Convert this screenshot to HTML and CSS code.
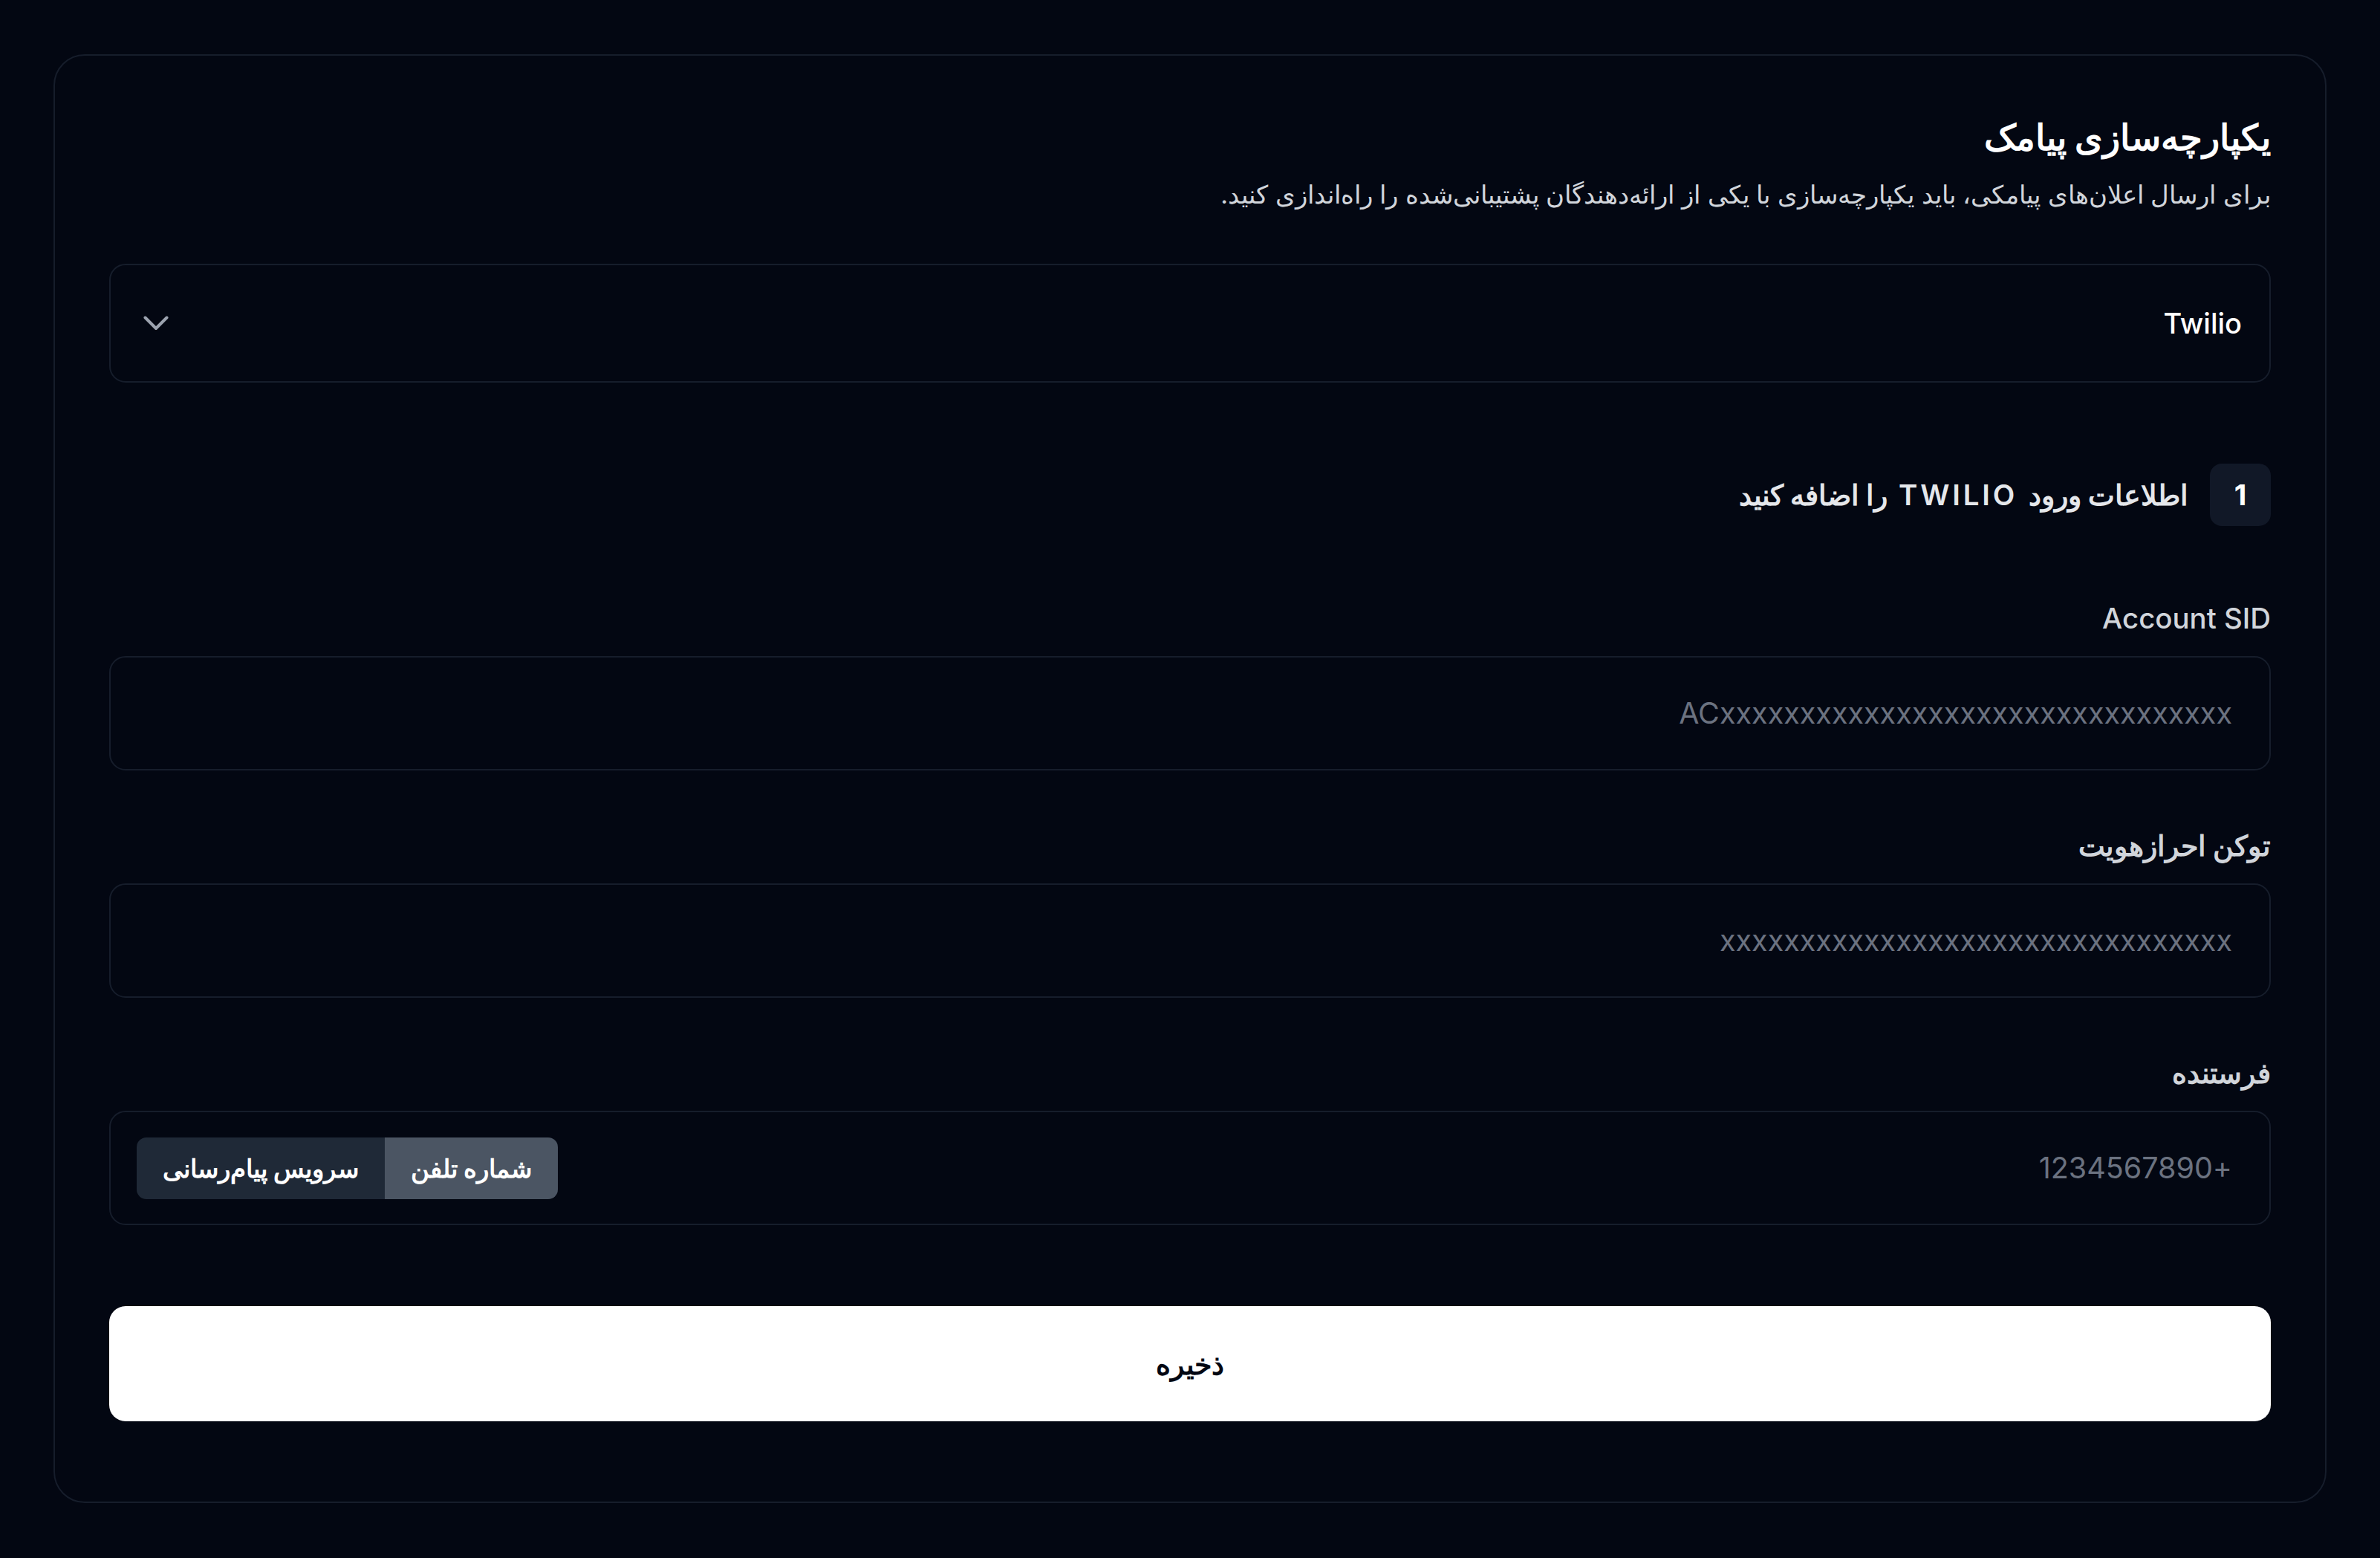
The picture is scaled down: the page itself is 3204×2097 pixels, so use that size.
FILE: index.html
```html
<!DOCTYPE html>
<html lang="fa" dir="rtl">
<head>
<meta charset="utf-8">
<title>یکپارچه‌سازی پیامک</title>
<link rel="stylesheet" href="styles.css">
</head>
<body>
<main class="card">
  <header class="head">
    <h1 class="title">یکپارچه‌سازی پیامک</h1>
    <p class="subtitle">برای ارسال اعلان‌های پیامکی، باید یکپارچه‌سازی با یکی از ارائه‌دهندگان پشتیبانی‌شده را راه‌اندازی کنید.</p>
  </header>

  <div class="select">
    <span class="select-value">Twilio</span>
    <svg class="chevron" viewBox="0 0 34 20" width="34" height="20" aria-hidden="true">
      <path d="M2.5 2.5 L17 17 L31.5 2.5" fill="none" stroke="#9ca3af" stroke-width="4" stroke-linecap="round" stroke-linejoin="round"/>
    </svg>
  </div>

  <div class="step">
    <span class="badge">1</span>
    <h2 class="step-title">اطلاعات ورود <span class="brand">Twilio</span> را اضافه کنید</h2>
  </div>

  <div class="fields">
    <div class="field">
      <label class="label">Account SID</label>
      <div class="box"><input class="input" type="text" placeholder="ACxxxxxxxxxxxxxxxxxxxxxxxxxxxxxxxx"></div>
    </div>
    <div class="field">
      <label class="label label-fa">توکن احرازهویت</label>
      <div class="box"><input class="input" type="text" placeholder="xxxxxxxxxxxxxxxxxxxxxxxxxxxxxxxx"></div>
    </div>
    <div class="field">
      <label class="label label-fa">فرستنده</label>
      <div class="box box-sender">
        <input class="input" type="text" placeholder="+1234567890">
        <div class="toggle">
          <span class="seg seg-active">شماره تلفن</span>
          <span class="seg">سرویس پیام‌رسانی</span>
        </div>
      </div>
    </div>
  </div>

  <button class="save" type="button">ذخیره</button>
</main>
</body>
</html>
```
FILE: styles.css
```css
* { box-sizing: border-box; }
html, body { margin: 0; padding: 0; }
body {
  background: #030712;
  color: #f9fafb;
  font-family: Inter, sans-serif;
  padding: 73px 0 74px;
}
.card {
  width: 3060px;
  margin: 0 auto;
  border: 2px solid #161d2b;
  border-radius: 42px;
  padding: 73px 73px 108px;
  display: flex;
  flex-direction: column;
}
.head { display: flex; flex-direction: column; }
.title {
  margin: 0;
  font-size: 48px;
  line-height: 74px;
  font-weight: 700;
  color: #ffffff;
}
.subtitle {
  margin: 16px 0 0;
  font-size: 34.2px;
  line-height: 48px;
  color: #d1d5db;
}
.select {
  margin-top: 69px;
  height: 160px;
  border: 2px solid #161d2b;
  border-radius: 22px;
  display: flex;
  align-items: center;
  justify-content: space-between;
  padding: 0 37px 0 44px;
}
.select-value {
  font-size: 38px;
  color: #ffffff;
  font-weight: 500;
}
.chevron { display: block; width: 34px; height: 20px; }
.step {
  margin-top: 109px;
  display: flex;
  align-items: center;
  gap: 29px;
}
.badge {
  width: 82px;
  height: 84px;
  border-radius: 16px;
  background: #111827;
  color: #ffffff;
  font-size: 38.4px;
  font-weight: 700;
  display: flex;
  align-items: center;
  justify-content: center;
}
.step-title {
  margin: 0;
  font-size: 38.4px;
  font-weight: 700;
  color: #e5e7eb;
  line-height: 50px;
}
.brand {
  letter-spacing: 0.1em;
  text-transform: uppercase;
  font-weight: 600;
  margin: 0 0.15em;
}
.fields {
  margin-top: 102px;
  display: flex;
  flex-direction: column;
  gap: 79px;
}
.field { display: flex; flex-direction: column; }
.label {
  font-size: 38.4px;
  line-height: 44px;
  font-weight: 500;
  color: #d1d5db;
  margin-bottom: 29px;
}
.label-fa { font-weight: 700; }
.box {
  height: 154px;
  border: 2px solid #161d2b;
  border-radius: 22px;
  display: flex;
  align-items: center;
}
.input {
  flex: 1;
  min-width: 0;
  height: 100%;
  background: transparent;
  border: 0;
  outline: none;
  padding: 0 50px;
  font-family: Inter, sans-serif;
  font-size: 39.5px;
  color: #f9fafb;
}
.input::placeholder { color: #6b7280; }
.box-sender { padding-left: 35px; }
.toggle {
  display: flex;
  height: 83px;
  border-radius: 13px;
  overflow: hidden;
}
.seg {
  display: flex;
  align-items: center;
  padding: 0 35px;
  background: #1f2937;
  color: #ffffff;
  font-size: 33.6px;
  font-weight: 700;
}
.seg-active { background: #4b5563; }
.save {
  margin-top: 109px;
  height: 155px;
  border: 0;
  border-radius: 22px;
  background: #ffffff;
  color: #030712;
  font-family: Inter, sans-serif;
  font-size: 38.4px;
  font-weight: 700;
}
```
